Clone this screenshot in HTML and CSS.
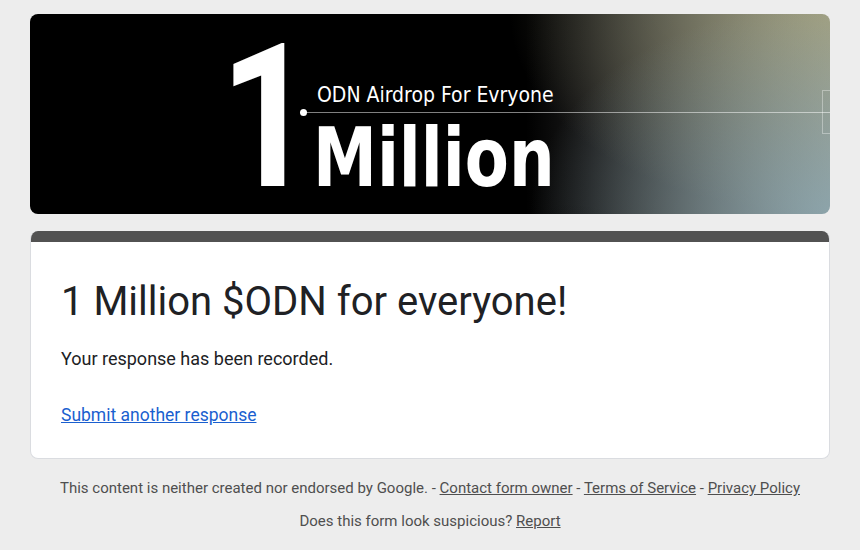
FILE: index.html
```html
<!DOCTYPE html>
<html lang="en">
<head>
  <meta charset="UTF-8" />
  <title>1 Million $ODN for everyone!</title>
  <link rel="stylesheet" href="styles.css">
</head>
<body>
  <div class="page">
    <div class="banner">
      <div class="banner-art">
        <div class="big-one"><span>1</span></div>
        <div class="banner-words">
          <span class="tagline">ODN Airdrop For Evryone</span>
          <span class="million">Million</span>
        </div>
      </div>
      <div class="banner-rule"><span class="dot"></span></div>
      <div class="banner-tab"></div>
    </div>

    <div class="card">
      <div class="card-strip"></div>
      <div class="card-body">
        <h1 class="form-title">1 Million $ODN for everyone!</h1>
        <p class="confirm">Your response has been recorded.</p>
        <a class="again" href="#">Submit another response</a>
      </div>
    </div>

    <div class="footer">
      <p>This content is neither created nor endorsed by Google. - <a href="#">Contact form owner</a> - <a href="#">Terms of Service</a> - <a href="#">Privacy Policy</a></p>
      <p>Does this form look suspicious? <a href="#">Report</a></p>
    </div>
  </div>
</body>
</html>
```

FILE: styles.css
```css
body {
  margin: 0;
  background-color: #ededed;
  font-family: Roboto, Arial, sans-serif;
  color: #202124;
}

.page {
  width: 800px;
  margin: 0 auto;
  padding-top: 14px;
}

/* Header image */
.banner {
  position: relative;
  height: 200px;
  border-radius: 8px;
  overflow: hidden;
  background:
    radial-gradient(ellipse 300px 210px at 100% 100%, rgba(140, 172, 184, 0.7), rgba(140, 172, 184, 0)),
    radial-gradient(ellipse 320px 200px at 100% 0%, rgba(168, 166, 126, 0.7), rgba(168, 166, 126, 0)),
    linear-gradient(200deg, rgba(0, 0, 0, 0) 55%, rgba(0, 0, 0, 0.25) 85%),
    linear-gradient(90deg, #000 0%, #000 62%, #1c1c1c 70%, #4a4b48 82%, #8e918a 100%);
}

.banner-art {
  display: flex;
  align-items: flex-start;
  padding-left: 190px;
  color: #fff;
}

.big-one {
  width: 97px;
  flex-shrink: 0;
  margin-top: 4px;
  font-family: Roboto, sans-serif;
  font-weight: bold;
  font-size: 200px;
  line-height: 200px;
}

.big-one span {
  display: inline-block;
  transform: scaleX(0.82);
  transform-origin: left top;
}

.banner-words {
  display: flex;
  flex-direction: column;
  align-items: flex-start;
  padding-top: 68px;
  font-family: "DejaVu Sans Condensed", sans-serif;
}

.tagline {
  font-size: 21px;
  line-height: 26px;
}

.million {
  margin-top: 9px;
  margin-left: -4px;
  font-weight: bold;
  font-size: 82px;
  line-height: 82px;
  transform: scaleX(0.87);
  transform-origin: left top;
}

.banner-rule {
  position: absolute;
  left: 273px;
  right: 0;
  top: 98px;
  height: 1px;
  background-color: rgba(255, 255, 255, 0.5);
}

.banner-rule .dot {
  position: absolute;
  left: -3px;
  top: -3px;
  width: 7px;
  height: 7px;
  border-radius: 50%;
  background-color: #fff;
}

.banner-tab {
  position: absolute;
  right: -2px;
  top: 76px;
  width: 8px;
  height: 42px;
  border: 1px solid rgba(255, 255, 255, 0.35);
}

/* Confirmation card */
.card {
  margin-top: 17px;
  background-color: #fff;
  border: 1px solid #dadce0;
  border-top: none;
  border-radius: 8px;
  overflow: hidden;
}

.card-strip {
  height: 11px;
  background-color: #525252;
}

.card-body {
  padding: 36px 30px 31px;
}

.form-title {
  margin: 0;
  font-size: 40px;
  font-weight: normal;
  line-height: 48px;
}

.confirm {
  margin: 21px 0 0;
  font-size: 18px;
  line-height: 24px;
}

.again {
  display: inline-block;
  margin-top: 32px;
  font-size: 17.5px;
  line-height: 24px;
  color: #1a5fcf;
}

/* Footer */
.footer {
  padding-top: 19px;
  text-align: center;
  font-size: 15px;
  color: #4f4f4f;
}

.footer p {
  margin: 0 0 13px;
  line-height: 20px;
}

.footer a {
  color: #4f4f4f;
}
```
